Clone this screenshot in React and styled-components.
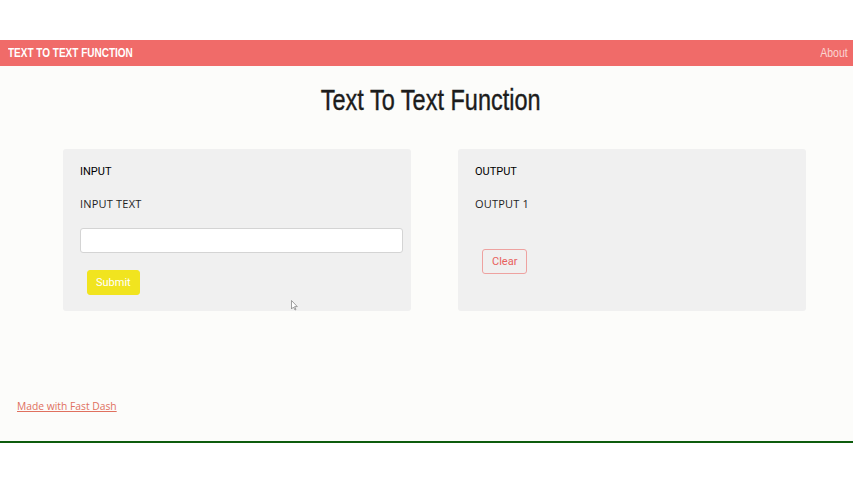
import React from 'react'
import styled, { createGlobalStyle, css } from 'styled-components'

const Global = createGlobalStyle`
  html, body { margin: 0; padding: 0; background: #ffffff; }
  body { font-family: "Open Sans", "Liberation Sans", sans-serif; }
`

// no narrow face installed, so squeeze Liberation Sans
const narrow = css`
  display: inline-block;
  font-family: "Liberation Sans", Arial, sans-serif;
  transform: scaleX(${p => p.$squeeze || 0.8});
`

const Page = styled.div`
  width: 853px;
  height: 480px;
  padding-top: 40px;
  box-sizing: border-box;
  background: #ffffff;
  position: relative;
`

const Shell = styled.div`
  height: 401px;
  background: #fcfcfa;
  border-bottom: 2px solid #0d5c0d;
  display: flex;
  flex-direction: column;
`

const Navbar = styled.nav`
  height: 26px;
  background: #f06b69;
  display: flex;
  align-items: center;
  justify-content: space-between;
  padding: 0 5px 0 8px;
`

const Brand = styled.span`
  ${narrow}
  transform-origin: left center;
  font-weight: 700;
  font-size: 12.5px;
  color: #ffffff;
`

const NavLink = styled.a`
  ${narrow}
  transform-origin: right center;
  font-size: 12.5px;
  color: rgba(255, 255, 255, 0.72);
  text-decoration: none;
`

const TitleRow = styled.div`
  margin-top: 16px;
  padding-left: 9px;
  display: flex;
  justify-content: center;
`

const Title = styled.h1`
  ${narrow}
  transform-origin: center center;
  margin: 0;
  font-weight: 400;
  font-size: 29px;
  line-height: 36px;
  color: #1c1c1c;
  -webkit-text-stroke: 0.4px #1c1c1c;
`

const Row = styled.div`
  display: flex;
  gap: 47px;
  padding: 31px 47px 0 63px;
`

const Card = styled.section`
  width: 348px;
  height: 162px;
  box-sizing: border-box;
  background: #f0f0f0;
  border-radius: 3px;
  padding: 16px 8px 0 17px;
  display: flex;
  flex-direction: column;
  align-items: flex-start;
`

const CardHead = styled.div`
  font-family: "Roboto", "Liberation Sans", sans-serif;
  font-weight: 400;
  font-size: 11px;
  line-height: 13px;
  color: #000;
`

const Label = styled.div`
  margin-top: 19px;
  font-family: "Open Sans", "Liberation Sans", sans-serif;
  font-weight: 400;
  font-size: 11px;
  line-height: 14px;
  letter-spacing: 0.2px;
  color: #1e1e1e;
`

const Field = styled.input`
  margin-top: 17px;
  width: 323px;
  height: 25px;
  box-sizing: border-box;
  border: 1px solid #d4d4d4;
  border-radius: 3px;
  background: #fff;
`

const Button = styled.button`
  margin-top: ${p => p.$top}px;
  margin-left: 7px;
  height: 25px;
  padding: 0 ${p => p.$pad}px;
  border-radius: 3px;
  font-family: "Roboto", "Liberation Sans", sans-serif;
  font-size: 11px;
  cursor: pointer;
  background: ${p => (p.$fill ? '#f1e41f' : 'transparent')};
  color: ${p => (p.$fill ? '#ffffff' : '#e8605c')};
  border: 1px solid ${p => (p.$fill ? '#f1e41f' : '#eea2a0')};
`

const Spacer = styled.div`
  flex: 1;
`

const Credit = styled.a`
  margin: 0 0 28px 17px;
  font-family: "Open Sans", "Liberation Sans", sans-serif;
  font-size: 10.3px;
  color: #e0705e;
  text-decoration: underline;
`

const Pointer = styled.svg`
  position: absolute;
  left: 291px;
  top: 300px;
`

export default function App() {
  return (
    <Page>
      <Global />
      <Shell>
        <Navbar>
          <Brand $squeeze={0.8}>TEXT TO TEXT FUNCTION</Brand>
          <NavLink href="#" $squeeze={0.84}>About</NavLink>
        </Navbar>
        <TitleRow>
          <Title $squeeze={0.81}>Text To Text Function</Title>
        </TitleRow>
        <Row>
          <Card>
            <CardHead>INPUT</CardHead>
            <Label>INPUT TEXT</Label>
            <Field type="text" />
            <Button $fill $top={17} $pad={8}>Submit</Button>
          </Card>
          <Card>
            <CardHead>OUTPUT</CardHead>
            <Label>OUTPUT 1</Label>
            <Button $top={38} $pad={9}>Clear</Button>
          </Card>
        </Row>
        <Spacer />
        <Credit href="#">Made with Fast Dash</Credit>
      </Shell>
      <Pointer width="7" height="11" viewBox="0 0 7 11">
        <path d="M0.5 0.5 L0.5 9 L2.5 7 L4 10 L5 9.5 L3.6 6.6 L6.3 6.6 Z" fill="#fff" stroke="#888" strokeWidth="0.8" />
      </Pointer>
    </Page>
  )
}
